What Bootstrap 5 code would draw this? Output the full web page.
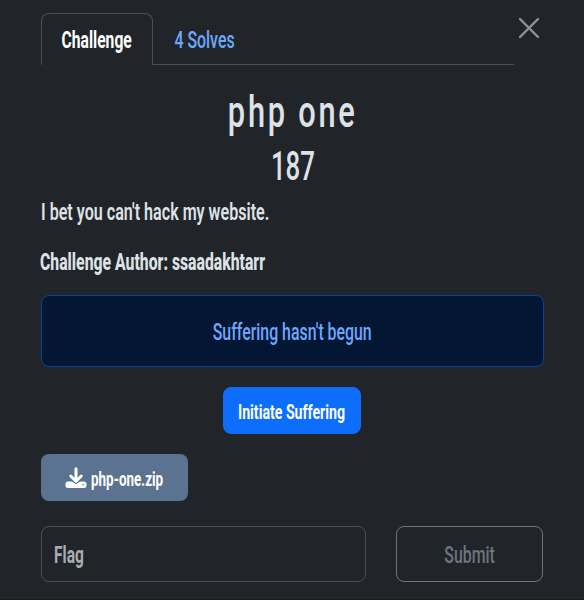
<!DOCTYPE html>
<html lang="en" data-bs-theme="dark">
<head>
<meta charset="utf-8">
<meta name="viewport" content="width=device-width, initial-scale=1">
<title>php one</title>
<link href="https://cdn.jsdelivr.net/npm/bootstrap@5.3.0/dist/css/bootstrap.min.css" rel="stylesheet">
<style>
body{background:#212529;color:#dee2e6;font-family:Roboto,"Liberation Sans",sans-serif;font-size:23px;line-height:30px;overflow:hidden}
.challenge{padding:13px 40px 0 41px;height:600px;border-bottom:1px solid #1c1a1d}
.cond{display:inline-block;white-space:nowrap;transform:translateY(var(--dy,1.5px)) scaleX(var(--sx,.68))}
.from-left{transform-origin:left center}
.tabs-bar{width:473px;height:52px;--bs-nav-tabs-border-color:#495057;--bs-nav-tabs-border-radius:8px}
.tabs-bar .nav-link{height:52px;padding:0;display:flex;align-items:center;justify-content:center;font-size:23px}
.tab-main{width:112px;font-weight:700}
.tabs-bar .tab-main.active{color:#fff;background:#212529;border-color:#495057 #495057 #212529}
.tab-solves{width:104px;color:#6ea8fe;font-weight:500}
.close-x{width:22px;height:22px;margin:4px 4px 0 0}
.title{font-size:45px;line-height:54px;margin-top:20px;letter-spacing:4px;font-weight:500;color:#dee2e6}
.points{font-size:41px;line-height:54px;font-weight:500;color:#dee2e6}
.desc{margin-top:3px;font-weight:600}
.author{margin-top:20px;font-weight:800;margin-left:-1px}
.status{width:503px;height:72px;margin-top:19px;background:#031633;border:1px solid #084298;color:#6ea8fe;border-radius:8px;font-weight:500}
.launch{width:138px;height:47px;margin:20px 2px 0 0;border-radius:8px;font-size:20.5px;font-weight:700}
.file{width:147px;height:47px;margin-top:20px;border-radius:8px;background:#5b7290;color:#fff;font-size:20.5px;font-weight:700;padding-left:24px}
.file svg{width:22px;height:22px;flex:none}
.entry{margin-top:25px}
.flag-box{width:325px;height:56px;border:1px solid #495057;border-radius:8px;padding-left:12px;color:#a7acb1;font-weight:700}
.send{width:147px;height:56px;border:1px solid #6c757d;border-radius:8px;color:#6c757d;margin-left:30px;font-weight:500}
.t-challenge{--sx:.68;--dy:2px}.t-solves{--sx:.69;--dy:2px}.t-title{--sx:.685;--dy:0px}.t-points{--sx:.63;--dy:0px}
.t-desc{--sx:.7}.t-author{--sx:.685}.t-status{--sx:.69;--dy:2px}.t-launch{--sx:.69;--dy:2px}
.t-file{--sx:.655;--dy:1px}.t-flag{--sx:.675;--dy:2px}.t-send{--sx:.69;--dy:2px}
</style>
<script src="https://cdn.jsdelivr.net/npm/bootstrap@5.3.0/dist/js/bootstrap.bundle.min.js"></script>
</head>
<body>
<main class="challenge">
  <div class="d-flex justify-content-between align-items-start">
    <ul class="nav nav-tabs tabs-bar flex-nowrap">
      <li class="nav-item"><a class="nav-link tab-main active" href="#"><span class="cond t-challenge">Challenge</span></a></li>
      <li class="nav-item"><a class="nav-link tab-solves" href="#"><span class="cond t-solves">4 Solves</span></a></li>
    </ul>
    <svg class="close-x" viewBox="0 0 22 22" role="button" aria-label="Close"><path d="M2 2 20 20M20 2 2 20" fill="none" stroke="#909294" stroke-width="2.4" stroke-linecap="round"/></svg>
  </div>
  <h2 class="title text-center mb-0"><span class="cond t-title">php one</span></h2>
  <h3 class="points text-center mb-0"><span class="cond t-points">187</span></h3>
  <p class="desc mb-0"><span class="cond from-left t-desc">I bet you can't hack my website.</span></p>
  <p class="author mb-0"><span class="cond from-left t-author">Challenge Author: ssaadakhtarr</span></p>
  <div class="status d-flex align-items-center justify-content-center"><span class="cond t-status">Suffering hasn't begun</span></div>
  <div class="d-flex justify-content-center">
    <button class="btn btn-primary launch d-flex align-items-center justify-content-center p-0"><span class="cond t-launch">Initiate Suffering</span></button>
  </div>
  <a class="file d-flex align-items-center text-decoration-none" href="#">
    <svg viewBox="0 0 22 22" fill="none"><path d="M3 14.5h16a2.5 2.5 0 0 1 2.5 2.5v1.5A2.5 2.5 0 0 1 19 21H3a2.5 2.5 0 0 1-2.5-2.5V17A2.5 2.5 0 0 1 3 14.5z" fill="#fff"/><path d="m6.2 13.2 4.8 3.2 4.8-3.2" stroke="#5b7290" stroke-width="1.6"/><path d="M11 1.8v12M5.7 9l5.3 5.2L16.3 9" stroke="#fff" stroke-width="3" stroke-linecap="round" stroke-linejoin="round"/><circle cx="18" cy="17.8" r=".8" fill="#5b7290"/></svg>
    <span class="cond from-left t-file ms-1">php-one.zip</span>
  </a>
  <div class="entry d-flex">
    <div class="flag-box d-flex align-items-center"><span class="cond from-left t-flag">Flag</span></div>
    <div class="send d-flex align-items-center justify-content-center"><span class="cond t-send">Submit</span></div>
  </div>
</main>
</body>
</html>
